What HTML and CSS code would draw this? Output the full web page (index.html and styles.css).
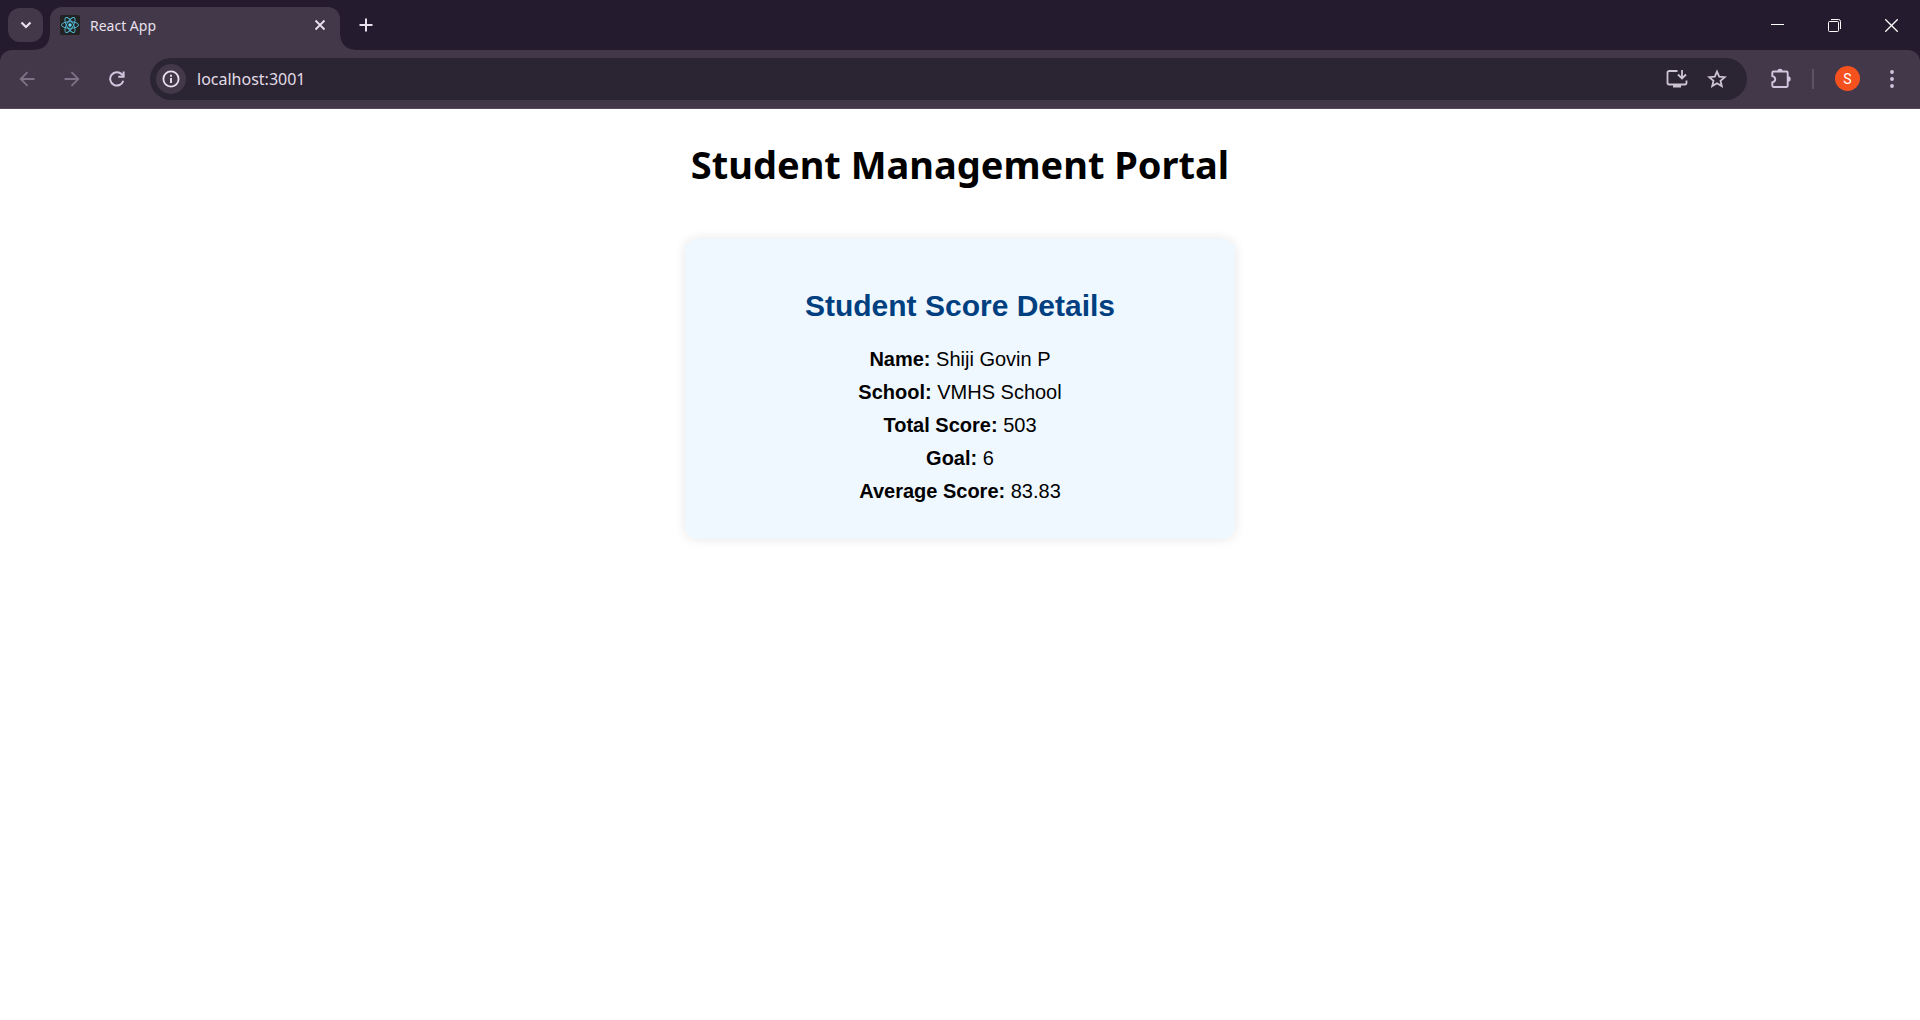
FILE: index.html
```html
<!DOCTYPE html>
<html lang="en">
<head>
<meta charset="utf-8">
<title>React App</title>
<link rel="stylesheet" href="styles.css">
</head>
<body>
<header class="browser">
  <div class="tabstrip">
    <button class="tab-search" aria-label="Search tabs">
      <svg width="12" height="8" viewBox="0 0 12 8"><path d="M1.5 1.5 6 6l4.500-4.500" fill="none" stroke="currentColor" stroke-width="2.200"/></svg>
    </button>
    <div class="tab">
      <svg class="favicon" width="20" height="20" viewBox="0 0 20 20"><rect width="20" height="20" rx="2" fill="#222"/><g fill="none" stroke="#53bdd8" stroke-width="0.9"><ellipse cx="10" cy="10" rx="8.500" ry="3.300"/><ellipse cx="10" cy="10" rx="8.500" ry="3.300" transform="rotate(60 10 10)"/><ellipse cx="10" cy="10" rx="8.500" ry="3.300" transform="rotate(120 10 10)"/></g><circle cx="10" cy="10" r="1.700" fill="#61dafb"/></svg>
      <span class="tab-title">React App</span>
      <button class="plain close-tab" aria-label="Close tab">
        <svg width="12" height="12" viewBox="0 0 12 12"><path d="M1.500 1.500l9 9m0-9l-9 9" stroke="currentColor" stroke-width="1.800"/></svg>
      </button>
    </div>
    <button class="plain new-tab" aria-label="New tab">
      <svg width="14" height="14" viewBox="0 0 14 14"><path d="M7 .5v13M.5 7h13" stroke="currentColor" stroke-width="2"/></svg>
    </button>
    <div class="window-buttons">
      <button class="plain" aria-label="Minimize"><svg width="13" height="13" viewBox="0 0 13 13"><path d="M0 5.500h13" stroke="currentColor"/></svg></button>
      <button class="plain" aria-label="Restore"><svg width="13" height="13" viewBox="0 0 13 13"><g fill="none" stroke="currentColor"><rect x=".5" y="2.500" width="10" height="10" rx="1"/><path d="M3 .5h7.500a2 2 0 0 1 2 2V10"/></g></svg></button>
      <button class="plain" aria-label="Close"><svg width="13" height="13" viewBox="0 0 13 13"><path d="M.3.3l12.400 12.400m0-12.400L.3 12.700" stroke="currentColor" stroke-width="1.300"/></svg></button>
    </div>
  </div>
  <div class="toolbar">
    <nav class="history">
      <button class="plain" aria-label="Back" disabled><svg width="16" height="16" viewBox="0 0 16 16"><path d="M15.500 8H2M8.500 1.200 1.700 8l6.800 6.800" fill="none" stroke="currentColor" stroke-width="1.800"/></svg></button>
      <button class="plain" aria-label="Forward" disabled><svg width="16" height="16" viewBox="0 0 16 16"><path d="M.5 8H14M7.500 1.200 14.300 8l-6.800 6.800" fill="none" stroke="currentColor" stroke-width="1.800"/></svg></button>
      <button class="plain" aria-label="Reload"><svg width="16" height="16" viewBox="0 0 16 16"><path d="M14.300 9.800A6.700 6.700 0 1 1 12.800 3.300L14.500 5" fill="none" stroke="currentColor" stroke-width="2"/><path d="M14.600.5v5.300H9.300" fill="none" stroke="currentColor" stroke-width="2"/></svg></button>
    </nav>
    <div class="omnibox">
      <button class="site-info" aria-label="View site information"><svg width="18" height="18" viewBox="0 0 18 18"><circle cx="9" cy="9" r="7.600" fill="none" stroke="currentColor" stroke-width="1.800"/><path d="M9 8v5M9 4.800v1.900" stroke="currentColor" stroke-width="1.900"/></svg></button>
      <input class="address" type="text" aria-label="Address" value="localhost:3001">
      <button class="plain" aria-label="Install app"><svg width="22" height="20" viewBox="0 0 22 20"><path d="M11.500 2H3.200A1.700 1.700 0 0 0 1.500 3.700v10.100a1.700 1.700 0 0 0 1.700 1.700h15.600a1.700 1.700 0 0 0 1.700-1.700v-2.300M16 1v8M12 5.500l4 4 4-4" fill="none" stroke="currentColor" stroke-width="1.800"/><path d="M7 15h8v3.500H7z" fill="currentColor"/></svg></button>
      <button class="plain" aria-label="Bookmark this tab"><svg width="20" height="20" viewBox="0 0 20 20"><path d="M10 2.600l2.200 5 5.500.5-4.200 3.600 1.300 5.400L10 14.200l-4.800 2.900 1.300-5.400L2.300 8.100l5.500-.5z" fill="none" stroke="currentColor" stroke-width="1.800"/></svg></button>
    </div>
    <div class="actions">
      <button class="plain" aria-label="Extensions"><svg width="22" height="22" viewBox="0 0 22 22"><path d="M3.500 3.500h13a1.200 1.200 0 0 1 1.200 1.200v13.100a1.200 1.200 0 0 1-1.200 1.200h-13a1.200 1.200 0 0 1-1.200-1.200v-3.500c3.900-1 3.900-5.200 0-6.200V4.700a1.200 1.200 0 0 1 1.200-1.200z" fill="none" stroke="currentColor" stroke-width="1.900"/><path d="M7.300 3.500a2.700 2.700 0 0 1 5.400 0zM18 8.300a2.700 2.700 0 0 1 0 5.400z" fill="currentColor"/></svg></button>
      <span class="divider"></span>
      <button class="avatar" aria-label="Profile">S</button>
      <button class="plain" aria-label="Menu"><svg width="4" height="18" viewBox="0 0 4 18"><g fill="currentColor"><circle cx="2" cy="2" r="1.900"/><circle cx="2" cy="9" r="1.900"/><circle cx="2" cy="16" r="1.900"/></g></svg></button>
    </div>
  </div>
</header>
<main class="page">
  <h1>Student Management Portal</h1>
  <section class="card">
    <h2>Student Score Details</h2>
    <p><b>Name:</b> Shiji Govin P</p>
    <p><b>School:</b> VMHS School</p>
    <p><b>Total Score:</b> 503</p>
    <p><b>Goal:</b> 6</p>
    <p><b>Average Score:</b> 83.83</p>
  </section>
</main>
</body>
</html>
```
FILE: styles.css
```css
* {
  box-sizing: border-box;
}

body {
  margin: 0;
  background: #fff;
  color: #000;
  font-family: "Liberation Sans", Arial, sans-serif;
}

button {
  display: flex;
  align-items: center;
  justify-content: center;
  padding: 0;
  border: 0;
  color: inherit;
  font: inherit;
}

.plain {
  background: none;
}

.browser {
  background: #241c2e;
  color: #e8e0ec;
  font-family: "Noto Sans", sans-serif;
}

.tabstrip {
  display: flex;
  height: 50px;
  padding: 7px 0 0 8px;
}

.tab-search {
  width: 35px;
  height: 34px;
  margin: 1px 7px 0 0;
  border-radius: 12px;
  background: #42384a;
}

.tab {
  position: relative;
  display: flex;
  align-items: center;
  width: 290px;
  padding: 0 9px 7px 10px;
  border-radius: 12px 12px 0 0;
  background: #42384a;
}

.tab::before,
.tab::after {
  content: "";
  position: absolute;
  bottom: 0;
  width: 14px;
  height: 14px;
}

.tab::before {
  right: 100%;
  background: radial-gradient(circle at 0 0, transparent 13px, #42384a 14px);
}

.tab::after {
  left: 100%;
  background: radial-gradient(circle at 100% 0, transparent 13px, #42384a 14px);
}

.tab-title {
  flex: 1;
  margin-left: 10px;
  font-size: 14px;
}

.close-tab {
  width: 22px;
  height: 22px;
}

.new-tab {
  width: 36px;
  height: 36px;
  margin-left: 8px;
}

.window-buttons {
  display: flex;
  margin-left: auto;
  color: #fff;
}

.window-buttons button {
  width: 57px;
  height: 36px;
}

.toolbar {
  display: flex;
  align-items: center;
  height: 59px;
  padding: 0 26px 1px 4px;
  border-bottom: 1px solid #554a5c;
  border-radius: 12px 12px 0 0;
  background: #42384a;
  color: #d3c5de;
}

.history {
  display: flex;
}

.history button {
  width: 45px;
  height: 36px;
}

.history button:disabled {
  color: #7d7287;
}

.omnibox {
  display: flex;
  flex: 1;
  align-items: center;
  gap: 19px;
  height: 42px;
  margin-left: 11px;
  padding: 0 20px 0 6px;
  border-radius: 21px;
  background: #2a2433;
  color: #cdc4d2;
}

.site-info {
  width: 30px;
  height: 30px;
  border-radius: 50%;
  background: #42384a;
  color: #e8e0ec;
}

.address {
  flex: 1;
  min-width: 0;
  margin-left: -8px;
  padding: 0;
  border: 0;
  outline: 0;
  background: none;
  color: #e2dce6;
  font-family: "Noto Sans", sans-serif;
  font-size: 16px;
}

.actions {
  display: flex;
  align-items: center;
  margin-left: 23px;
}

.divider {
  width: 2px;
  height: 20px;
  margin: 0 21px 0 20px;
  background: #5d5366;
}

.avatar {
  width: 25px;
  height: 25px;
  margin-right: 30px;
  border-radius: 50%;
  background: #f4511e;
  color: #fff;
  font-family: Roboto, sans-serif;
  font-size: 14px;
}

.page {
  padding: 29px 20px;
  text-align: center;
}

h1 {
  margin: 0 0 48px;
  font-family: "Noto Sans", sans-serif;
  font-size: 38px;
  line-height: 53px;
}

.card {
  max-width: 550px;
  margin: 0 auto;
  padding: 49px 25px 26px;
  border-radius: 12px;
  background: #f0f8ff;
  box-shadow: 0 0 12px rgba(0, 0, 0, 0.1);
}

h2 {
  margin: 0 0 25px;
  color: #004080;
  font-size: 30px;
  line-height: 35px;
}

p {
  margin: 0 0 10px;
  font-size: 20px;
  line-height: 23px;
}
```
